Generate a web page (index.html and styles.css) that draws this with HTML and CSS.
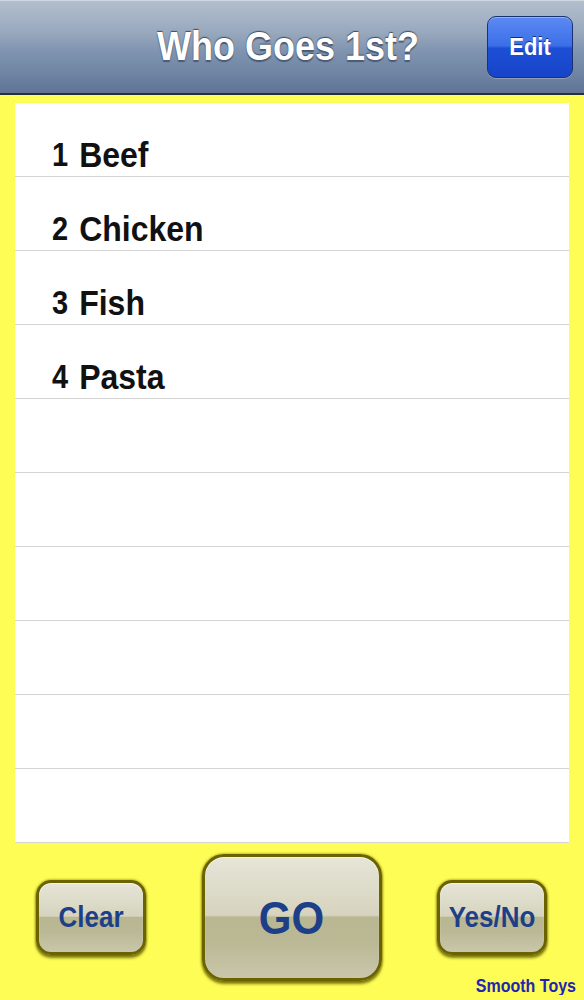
FILE: index.html
```html
<!DOCTYPE html>
<html lang="en">
<head>
<meta charset="utf-8">
<title>Who Goes 1st?</title>
<link rel="stylesheet" href="styles.css">
</head>
<body>
<div class="app">
  <header class="navbar">
    <div class="nav-side"></div>
    <h1 class="nav-title"><span class="tall">Who Goes 1st?</span></h1>
    <div class="nav-side nav-right">
      <button class="edit-btn"><span class="tall">Edit</span></button>
    </div>
  </header>

  <main class="content">
    <ul class="list">
      <li class="row"><span class="num tall">1</span><span class="name tall">Beef</span></li>
      <li class="row"><span class="num tall">2</span><span class="name tall">Chicken</span></li>
      <li class="row"><span class="num tall">3</span><span class="name tall">Fish</span></li>
      <li class="row"><span class="num tall">4</span><span class="name tall">Pasta</span></li>
      <li class="row"></li>
      <li class="row"></li>
      <li class="row"></li>
      <li class="row"></li>
      <li class="row"></li>
      <li class="row"></li>
    </ul>
  </main>

  <footer class="toolbar">
    <button class="btn btn-small"><span class="tall">Clear</span></button>
    <button class="btn btn-go"><span class="tall">GO</span></button>
    <button class="btn btn-small"><span class="tall">Yes/No</span></button>
    <span class="brand tall">Smooth Toys</span>
  </footer>
</div>
</body>
</html>
```

FILE: styles.css
```css
html, body {
  margin: 0;
  padding: 0;
}

body {
  width: 584px;
  height: 1000px;
  background: #fefd55;
  font-family: "Liberation Sans", Arial, sans-serif;
  overflow: hidden;
}

.app {
  display: flex;
  flex-direction: column;
  height: 1000px;
}

/* the reference is slightly stretched vertically */
.tall {
  display: inline-block;
  transform: scaleY(1.12);
}

.navbar {
  height: 93px;
  display: grid;
  grid-template-columns: 1fr auto 1fr;
  align-items: center;
  background: linear-gradient(to bottom, #b3bfce 0%, #98a8bd 35%, #8094b0 55%, #6e84a2 80%, #5f7492 100%);
  border-bottom: 2px solid #26303c;
  box-shadow: inset 0 1px 0 #cfd7e1;
}

.nav-right {
  display: flex;
  justify-content: flex-end;
  padding-right: 11px;
}

.nav-title {
  margin: 0;
  font-size: 36px;
  font-weight: bold;
  color: #ffffff;
  text-shadow: 0 -1px 1px #3a4a62, 0 1px 1px #4a5a72;
  padding-right: 8px;
}

.edit-btn {
  width: 86px;
  height: 62px;
  margin-top: 1px;
  border: 1px solid #1b3272;
  border-radius: 9px;
  background: linear-gradient(to bottom, #5b8af2 0%, #3c6ee8 48%, #1d4fd6 52%, #1744c8 100%);
  box-shadow: inset 0 1px 0 rgba(255,255,255,0.35), 0 1px 0 rgba(255,255,255,0.25);
  color: #ffffff;
  font-family: "Liberation Sans", Arial, sans-serif;
  font-weight: bold;
  font-size: 22px;
  text-shadow: 0 -1px 0 #1a2f70;
  padding: 0;
}

.content {
  padding: 8px 15px 0;
}

.list {
  list-style: none;
  margin: 0;
  padding: 0;
  background: #ffffff;
}

.row {
  border-bottom: 1px solid #d4d4d4;
  display: flex;
  align-items: center;
  padding: 31px 0 0 37px;
  box-sizing: border-box;
  height: 74px;
  color: #111111;
  font-weight: bold;
}

.num {
  font-size: 29px;
  margin-right: 11px;
}

.name {
  font-size: 32px;
}

.toolbar {
  position: relative;
  flex: 1;
  display: flex;
  align-items: flex-start;
  justify-content: space-between;
  padding: 11px 37px 0 36px;
}

.btn {
  font-family: "Liberation Sans", Arial, sans-serif;
  font-weight: bold;
  color: #1c3f88;
  border: 3px solid #6a6300;
  background: linear-gradient(to bottom, #e6e5d7 0%, #d6d4bf 48%, #b9b692 50%, #bbb895 70%, #c9c7ab 100%);
  box-shadow: 0 3px 3px rgba(90, 84, 0, 0.75), 0 0 2px 1px rgba(140, 130, 0, 0.5), inset 0 1px 1px #f4f3ea;
  padding: 0;
  box-sizing: border-box;
}

.btn-small {
  width: 110px;
  height: 75px;
  margin-top: 26px;
  border-radius: 15px;
  font-size: 26px;
}

.btn-go {
  width: 180px;
  height: 127px;
  border-radius: 22px;
  font-size: 42px;
}

.brand {
  position: absolute;
  right: 8px;
  bottom: 5px;
  font-size: 16px;
  font-weight: bold;
  color: #2424b4;
}
```
